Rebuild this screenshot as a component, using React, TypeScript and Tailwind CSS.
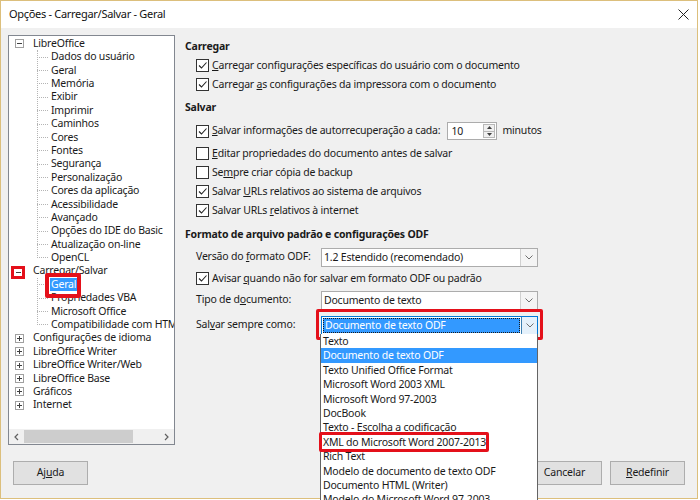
import React from "react";

const FONT = "font-['Noto_Sans','Open_Sans',sans-serif]";
const BODY_TEXT = "text-[10.5px] tracking-[-0.2px] text-[#1a1a1a]";

type TreeNode = { label: string; children?: string[]; open?: boolean };

const tree: TreeNode[] = [
  {
    label: "LibreOffice",
    open: true,
    children: [
      "Dados do usuário",
      "Geral",
      "Memória",
      "Exibir",
      "Imprimir",
      "Caminhos",
      "Cores",
      "Fontes",
      "Segurança",
      "Personalização",
      "Cores da aplicação",
      "Acessibilidade",
      "Avançado",
      "Opções do IDE do Basic",
      "Atualização on-line",
      "OpenCL",
    ],
  },
  {
    label: "Carregar/Salvar",
    open: true,
    children: ["Geral", "Propriedades VBA", "Microsoft Office", "Compatibilidade com HTML"],
  },
  { label: "Configurações de idioma" },
  { label: "LibreOffice Writer" },
  { label: "LibreOffice Writer/Web" },
  { label: "LibreOffice Base" },
  { label: "Gráficos" },
  { label: "Internet" },
];

const saveAsOptions = [
  "Texto",
  "Documento de texto ODF",
  "Texto Unified Office Format",
  "Microsoft Word 2003 XML",
  "Microsoft Word 97-2003",
  "DocBook",
  "Texto - Escolha a codificação",
  "XML do Microsoft Word 2007-2013",
  "Rich Text",
  "Modelo de documento de texto ODF",
  "Documento HTML (Writer)",
  "Modelo do Microsoft Word 97-2003",
];

function Expander({ open }: { open?: boolean }) {
  return (
    <span className="relative w-[9px] h-[9px] border border-[#a0a0a0] bg-white flex items-center justify-center shrink-0">
      <span className="w-[5px] h-px bg-[#404040]" />
      {!open && <span className="absolute w-px h-[5px] bg-[#404040]" />}
    </span>
  );
}

function Tree() {
  return (
    <div className="w-[167px] h-[410px] border border-[#828790] bg-white flex flex-col">
      <div className={`flex-1 overflow-hidden pt-px ${BODY_TEXT}`}>
        {tree.map((node) => (
          <div key={node.label}>
            <div className="h-[13.4px] flex items-center whitespace-nowrap">
              <span className="w-[6px] shrink-0" />
              <Expander open={node.open} />
              <span className="ml-[9px]">{node.label}</span>
            </div>
            {node.open && node.children && (
              <div className="relative">
                <div className="absolute left-[28px] top-0 bottom-[7px] border-l border-dotted border-[#b4b4b4]" />
                {node.children.map((c, i) => {
                  const selected = node.label === "Carregar/Salvar" && i === 0;
                  return (
                    <div key={c} className="h-[13.4px] flex items-center whitespace-nowrap">
                      <span className="w-[28px] shrink-0" />
                      <span className="w-[11px] border-t border-dotted border-[#b4b4b4] shrink-0" />
                      <span
                        className={
                          selected
                            ? "ml-[2px] px-px bg-[#3399ff] text-white leading-[13px]"
                            : "ml-[3px]"
                        }
                      >
                        {c}
                      </span>
                    </div>
                  );
                })}
              </div>
            )}
          </div>
        ))}
      </div>
      <div className="h-[15px] bg-[#f0f0f0] flex items-center shrink-0">
        <span className="w-[15px] flex justify-center">
          <svg width="5" height="8" viewBox="0 0 5 8">
            <path d="M4 1 L1 4 L4 7" fill="none" stroke="#606060" strokeWidth="1.2" />
          </svg>
        </span>
        <span className="w-[109px] h-[13px] bg-[#cdcdcd]" />
        <span className="flex-1" />
        <span className="w-[15px] flex justify-center">
          <svg width="5" height="8" viewBox="0 0 5 8">
            <path d="M1 1 L4 4 L1 7" fill="none" stroke="#606060" strokeWidth="1.2" />
          </svg>
        </span>
      </div>
    </div>
  );
}

function Check({ on }: { on?: boolean }) {
  return (
    <span className="w-[13px] h-[13px] border border-[#333333] bg-white flex items-center justify-center shrink-0">
      {on && (
        <svg width="11" height="11" viewBox="0 0 11 11">
          <path d="M2 5.5 L4.5 8 L9.5 2.5" fill="none" stroke="#222222" strokeWidth="1.1" />
        </svg>
      )}
    </span>
  );
}

function CheckRow({ on, children, h = "h-[19px]" }: { on?: boolean; children: React.ReactNode; h?: string }) {
  return (
    <div className={`${h} flex items-center pl-[11px]`}>
      <Check on={on} />
      <span className="ml-[3px] whitespace-nowrap">{children}</span>
    </div>
  );
}

function Chevron() {
  return (
    <svg width="8" height="5" viewBox="0 0 8 5">
      <path d="M0.5 0.5 L4 4 L7.5 0.5" fill="none" stroke="#707070" strokeWidth="1" />
    </svg>
  );
}

function Combo({ value }: { value: string }) {
  return (
    <div className="w-[217px] h-[19px] border border-[#acacac] bg-white flex">
      <span className="flex-1 px-[2px] leading-[17px] whitespace-nowrap">{value}</span>
      <span className="w-[17px] border-l border-[#d0d0d0] bg-[#f4f4f4] flex items-center justify-center">
        <Chevron />
      </span>
    </div>
  );
}

function FieldRow({ label, children, className = "" }: { label: React.ReactNode; children: React.ReactNode; className?: string }) {
  return (
    <div className={`h-[20px] flex items-center pl-[11px] ${className}`}>
      <span className="w-[125px] whitespace-nowrap">{label}</span>
      {children}
    </div>
  );
}

function Button({ children, className = "" }: { children: React.ReactNode; className?: string }) {
  return (
    <div
      className={`w-[75px] h-[24px] border border-[#adadad] bg-[#e1e1e1] flex items-center justify-center ${BODY_TEXT} ${className}`}
    >
      {children}
    </div>
  );
}

function RightPanel() {
  return (
    <div className={`ml-[10px] pt-[3px] ${BODY_TEXT}`}>
      <div className="h-[18px] flex items-center font-bold">Carregar</div>
      <CheckRow on>
        <u>C</u>arregar configurações específicas do usuário com o documento
      </CheckRow>
      <CheckRow on>
        Carregar <u>a</u>s configurações da impressora com o documento
      </CheckRow>
      <div className="h-[18px] mt-[5px] flex items-center font-bold">Salvar</div>
      <div className="h-[22px] mt-[3px] flex items-center pl-[11px]">
        <Check on />
        <span className="ml-[3px] whitespace-nowrap">
          <u>S</u>alvar informações de autorrecuperação a cada:
        </span>
        <div className="ml-[7px] w-[50px] h-[18px] border border-[#acacac] bg-white flex">
          <span className="flex-1 pl-[3px] leading-[16px]">10</span>
          <span className="w-[12px] my-[1px] mr-[1px] border border-[#b8b8b8] bg-[#f0f0f0] flex flex-col">
            <span className="flex-1 flex items-center justify-center border-b border-[#b8b8b8]">
              <svg width="5" height="3" viewBox="0 0 5 3">
                <path d="M0 3 L2.5 0 L5 3 Z" fill="#404040" />
              </svg>
            </span>
            <span className="flex-1 flex items-center justify-center">
              <svg width="5" height="3" viewBox="0 0 5 3">
                <path d="M0 0 L2.5 3 L5 0 Z" fill="#404040" />
              </svg>
            </span>
          </span>
        </div>
        <span className="ml-[5px]">minutos</span>
      </div>
      <div className="h-[2px]" />
      <CheckRow>
        <u>E</u>ditar propriedades do documento antes de salvar
      </CheckRow>
      <CheckRow>
        Se<u>m</u>pre criar cópia de backup
      </CheckRow>
      <CheckRow on>
        Salvar <u>U</u>RLs relativos ao sistema de arquivos
      </CheckRow>
      <CheckRow on>
        Salvar URLs <u>r</u>elativos à internet
      </CheckRow>
      <div className="h-[18px] mt-[6px] flex items-center font-bold">Formato de arquivo padrão e configurações ODF</div>
      <FieldRow label={<>Versão do <u>f</u>ormato ODF:</>} className="mt-[3px]">
        <Combo value="1.2 Estendido (recomendado)" />
      </FieldRow>
      <CheckRow on h="h-[23px]">
        Avisar <u>q</u>uando não for salvar em formato ODF ou padrão
      </CheckRow>
      <FieldRow label={<>Tipo de d<u>o</u>cumento:</>}>
        <Combo value="Documento de texto" />
      </FieldRow>
      <FieldRow label={<>Sal<u>v</u>ar sempre como:</>} className="mt-[5px]">
        <div className="w-[217px] h-[19px] border border-[#0078d7] bg-white flex">
          <span className="flex-1 m-px border border-dotted border-[#1a1a1a] bg-[#3399ff] text-white px-px leading-[13px] whitespace-nowrap">
            Documento de texto ODF
          </span>
          <span className="w-[16px] border-l border-[#3c7fb1] bg-[#e5f1fb] flex items-center justify-center">
            <Chevron />
          </span>
        </div>
      </FieldRow>
    </div>
  );
}

export default function App() {
  return (
    <div className={`w-[700px] h-[500px] bg-white overflow-hidden ${FONT}`}>
      <div className="relative w-[698px] h-[499px] border border-[#dcbf7c] bg-[#f0f0f0] flex flex-col">
        {/* title bar */}
        <div className="h-[27px] bg-white flex items-center justify-between pl-[8px] pr-[8px] text-[11px] tracking-[-0.3px] text-[#111]">
          <span>Opções - Carregar/Salvar - Geral</span>
          <svg width="11" height="11" viewBox="0 0 11 11">
            <path d="M0.5 0.5 L10.5 10.5 M10.5 0.5 L0.5 10.5" stroke="#222" strokeWidth="1" />
          </svg>
        </div>

        <div className="flex pt-[7px] pl-[7px]">
          <Tree />
          <RightPanel />
        </div>

        <div className="flex items-center mt-[16px] px-[12px]">
          <Button>
            Aj<u>u</u>da
          </Button>
          <span className="flex-1" />
          <Button className="mr-[8px]">OK</Button>
          <Button className="mr-[8px]">Cancelar</Button>
          <Button>
            <u>R</u>edefinir
          </Button>
        </div>

        {/* red annotation boxes */}
        <div className="absolute left-[10px] top-[265px] w-[14px] h-[13px] border-[3px] border-[#e4101a] bg-white flex items-center justify-center">
          <span className="w-[5px] h-px bg-[#404040]" />
        </div>
        <div className="absolute left-[44px] top-[272px] w-[36px] h-[25px] border-[4px] border-[#e4101a] rounded-[2px]" />
        <div className="absolute left-[315px] top-[308px] w-[227px] h-[31px] border-[3px] border-[#e4101a] rounded-[2px]" />

        {/* open dropdown list */}
        <div className={`absolute left-[319px] top-[333px] w-[218px] border border-[#646464] border-t-0 bg-white ${BODY_TEXT}`}>
          {saveAsOptions.map((o, i) => (
            <div
              key={o}
              className={`h-[14.4px] leading-[14.4px] pl-[2px] whitespace-nowrap ${i === 1 ? "bg-[#3399ff] text-white" : ""}`}
            >
              {i === 7 ? (
                <span className="relative">
                  {o}
                  <span className="absolute -left-[4px] -right-[3px] -top-[3px] -bottom-[3px] border-[3px] border-[#e4101a] rounded-[2px]" />
                </span>
              ) : (
                o
              )}
            </div>
          ))}
        </div>
      </div>
    </div>
  );
}
